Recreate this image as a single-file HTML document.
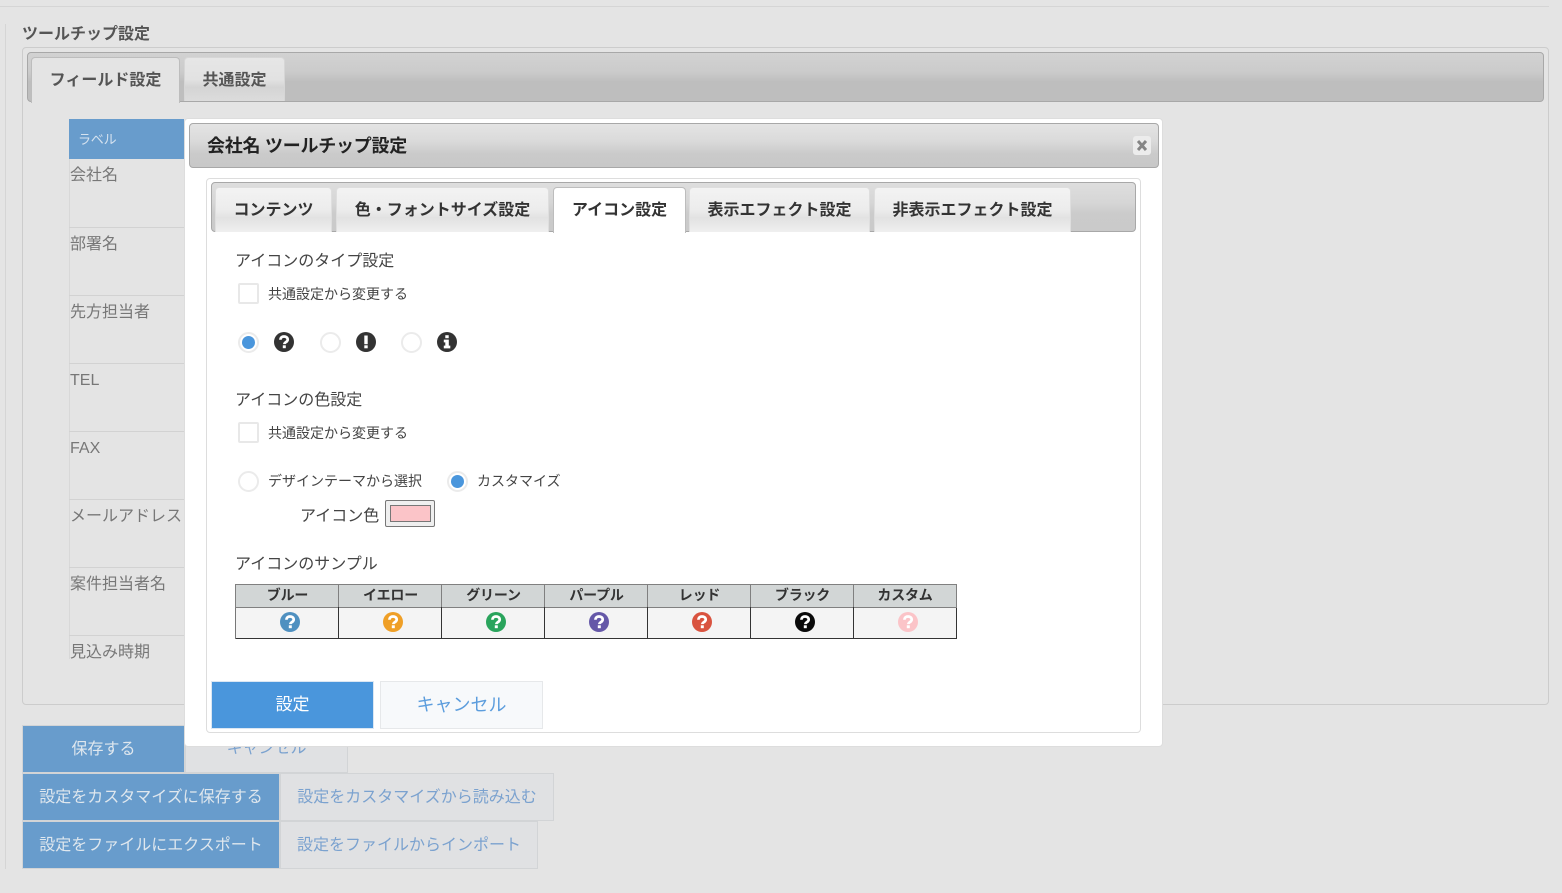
<!DOCTYPE html>
<html lang="ja"><head><meta charset="utf-8"><title>ツールチップ設定</title>
<style>
html,body{margin:0;padding:0;width:1562px;height:893px;overflow:hidden;background:#e4e4e4}
body{position:relative;font-family:"Liberation Sans","Noto Sans CJK JP",sans-serif;color:#333}
div,span,svg{position:absolute;box-sizing:border-box}
.t{white-space:nowrap;line-height:20px;height:20px}
.bar{background:linear-gradient(#d2d2d2 0,#cbcbcb 40%,#bebebe 60%,#bebebe 100%);border:1px solid #a8a8a8;border-radius:4px}
.tab{border-radius:4px 4px 0 0;text-align:center;font-weight:700;font-size:16px;line-height:46px;white-space:nowrap}
.tb{background:linear-gradient(#e6e6e6 0,#e2e2e2 50%,#d4d4d4 68%,#dcdcdc 100%);color:#555;border:1px solid #d6d6d6;border-bottom:0}
.ti{background:linear-gradient(#f3f3f3 0,#ececec 50%,#e2e2e2 68%,#efefef 100%);color:#333;border:1px solid #dedede;border-bottom:0}
.rl{left:69px;width:115px;height:1px;background:#d2d2d2}
.rt{left:70px;font-size:16px;color:#777}
.cb{width:21px;height:21px;border:2px solid #e8e8e8;background:#fff;border-radius:2px}
.rd{width:21px;height:21px;border:2px solid #ebebeb;background:#fff;border-radius:50%}
.rd.on:after{content:"";position:absolute;left:3px;top:3px;width:11px;height:11px;background:#4a96dc;border-radius:50%;display:block;box-shadow:0 0 0 1px #4a96dc}
.btn{text-align:center;font-size:16px;white-space:nowrap}
.p{background:#689ccc;color:#dfe7ee;border:1px solid #d2d4d6}
.s{background:#e0e1e3;color:#7ba2cf;border:1px solid #d2d4d6}
.th{top:585px;height:22px;width:103px;background:#d2d6d6;text-align:center;font-size:14px;font-weight:700;line-height:21px;letter-spacing:-.2px;color:#333;white-space:nowrap}
.vh{top:584px;width:1px;height:23px;background:#808080}
.vb{top:607px;width:1px;height:32px;background:#333}
</style></head><body>
<div style="left:0;top:6px;width:1549px;height:1px;background:#d5d5d5"></div>
<div style="left:5px;top:24px;width:1px;height:845px;background:#d5d5d5"></div>
<div class="t" style="left:22px;top:25px;font-size:16px;font-weight:700;color:#555">ツールチップ設定</div>
<div style="left:22px;top:47px;width:1527px;height:658px;border:1px solid #ccc;border-radius:4px"></div>
<div class="bar" style="left:27px;top:52px;width:1517px;height:50px"></div>
<div class="tab" style="left:31px;top:57px;width:149px;height:46px;background:#e4e4e4;border:1px solid #bdbdbd;border-bottom:0;color:#555">フィールド設定</div>
<div class="tab tb" style="left:184px;top:57px;width:101px;height:44px">共通設定</div>

<div style="left:69px;top:119px;width:115px;height:40px;background:#689ccc"></div>
<div class="t" style="left:78px;top:130px;font-size:13px;letter-spacing:-.2px;color:#d5e2ef">ラベル</div>
<div style="left:69px;top:159px;width:1px;height:500px;background:#d8d8d8"></div>
<div class="t rt" style="top:166px">会社名</div>
<div class="rl" style="top:227px"></div><div class="t rt" style="top:235px">部署名</div>
<div class="rl" style="top:295px"></div><div class="t rt" style="top:303px">先方担当者</div>
<div class="rl" style="top:363px"></div><div class="t rt" style="top:371px">TEL</div>
<div class="rl" style="top:431px"></div><div class="t rt" style="top:439px">FAX</div>
<div class="rl" style="top:499px"></div><div class="t rt" style="top:507px">メールアドレス</div>
<div class="rl" style="top:567px"></div><div class="t rt" style="top:575px">案件担当者名</div>
<div class="rl" style="top:635px"></div><div class="t rt" style="top:643px">見込み時期</div>

<div class="btn p" style="left:22px;top:725px;width:163px;height:48px;line-height:47px">保存する</div>
<div class="btn s" style="left:185px;top:725px;width:163px;height:48px;line-height:46px;font-size:16px">キャンセル</div>
<div class="btn p" style="left:22px;top:773px;width:258px;height:48px;line-height:47px">設定をカスタマイズに保存する</div>
<div class="btn s" style="left:280px;top:773px;width:274px;height:48px;line-height:47px">設定をカスタマイズから読み込む</div>
<div class="btn p" style="left:22px;top:821px;width:258px;height:48px;line-height:47px">設定をファイルにエクスポート</div>
<div class="btn s" style="left:280px;top:821px;width:258px;height:48px;line-height:47px">設定をファイルからインポート</div>

<!-- dialog -->
<div style="left:184px;top:118px;width:979px;height:629px;background:#fff;border:1px solid #ddd;border-radius:4px"></div>
<div style="left:189px;top:123px;width:970px;height:45px;border:1px solid #a8a8a8;border-radius:4px;background:linear-gradient(#e4e4e4 0,#dadada 40%,#cacaca 70%,#c8c8c8 100%)"></div>
<div class="t" style="left:207px;top:136px;font-size:18px;font-weight:700;letter-spacing:-.25px;color:#222">会社名 ツールチップ設定</div>
<div style="left:1133px;top:136px;width:18px;height:19px;background:#ececec;border-radius:3px"></div>
<svg style="left:1137px;top:140px" width="10" height="11" viewBox="0 0 10 11"><path d="M1 1L9 10M9 1L1 10" stroke="#858585" stroke-width="3" fill="none"/></svg>

<div style="left:206px;top:178px;width:935px;height:555px;border:1px solid #ddd;border-radius:4px"></div>
<div style="left:211px;top:182px;width:925px;height:50px;border:1px solid #a8a8a8;border-radius:4px;background:linear-gradient(#dedede 0,#d6d6d6 40%,#cbcbcb 65%,#cacaca 100%)"></div>
<div class="tab ti" style="left:215px;top:187px;width:117px;height:45px">コンテンツ</div>
<div class="tab ti" style="left:336px;top:187px;width:213px;height:45px">色・フォントサイズ設定</div>
<div class="tab" style="left:553px;top:187px;width:133px;height:46px;background:#fff;border:1px solid #bdbdbd;border-bottom:0;color:#333">アイコン設定</div>
<div class="tab ti" style="left:689px;top:187px;width:181px;height:45px">表示エフェクト設定</div>
<div class="tab ti" style="left:874px;top:187px;width:197px;height:45px">非表示エフェクト設定</div>

<div class="t" style="left:235px;top:252px;font-size:16px;color:#444">アイコンのタイプ設定</div>
<div class="cb" style="left:238px;top:283px"></div>
<div class="t" style="left:268px;top:284px;font-size:14px;color:#444">共通設定から変更する</div>
<div class="rd on" style="left:238px;top:332px"></div>
<div class="rd" style="left:320px;top:332px"></div>
<div class="rd" style="left:401px;top:332px"></div>
<svg style="left:274px;top:332px" width="20" height="20" viewBox="0 0 20 20"><circle cx="10" cy="10" r="10" fill="#333"/><path d="M6.300 7.800C6.500 5.600 8 4.500 10 4.500c2.100 0 3.700 1.200 3.700 3.100 0 2.500-3.300 2.500-3.300 4.500" fill="none" stroke="#fff" stroke-width="2.700"/><rect x="8.800" y="13.300" width="3" height="2.900" fill="#fff"/></svg>
<svg style="left:356px;top:332px" width="20" height="20" viewBox="0 0 20 20"><circle cx="10" cy="10" r="10" fill="#333"/><rect x="8.300" y="3.500" width="3.400" height="8.700" fill="#fff"/><rect x="8.300" y="13.300" width="3.400" height="3" fill="#fff"/></svg>
<svg style="left:437px;top:332px" width="20" height="20" viewBox="0 0 20 20"><circle cx="10" cy="10" r="10" fill="#333"/><rect x="8.300" y="3.200" width="3.400" height="3" fill="#fff"/><path d="M6.800 7.600h5v6h1.500v2.800H6.800v-2.800h1.500v-3.200H6.800z" fill="#fff"/></svg>

<div class="t" style="left:235px;top:391px;font-size:16px;color:#444">アイコンの色設定</div>
<div class="cb" style="left:238px;top:422px"></div>
<div class="t" style="left:268px;top:423px;font-size:14px;color:#444">共通設定から変更する</div>
<div class="rd" style="left:238px;top:471px"></div>
<div class="t" style="left:268px;top:471px;font-size:14px;color:#444">デザインテーマから選択</div>
<div class="rd on" style="left:447px;top:471px"></div>
<div class="t" style="left:477px;top:471px;font-size:14px;color:#444">カスタマイズ</div>
<div class="t" style="left:300px;top:507px;font-size:16px;color:#444">アイコン色</div>
<div style="left:385px;top:500px;width:50px;height:27px;background:#efefef;border:1px solid #777;border-radius:2px"></div>
<div style="left:390px;top:505px;width:41px;height:17px;background:#fbc4c8;border:1px solid #777"></div>

<div class="t" style="left:235px;top:555px;font-size:16px;color:#444">アイコンのサンプル</div>
<div style="left:235px;top:584px;width:722px;height:55px;background:#f4f4f4;border:1px solid #333;border-top:0"></div>
<div style="left:235px;top:584px;width:722px;height:24px;background:#d2d6d6;border:1px solid #808080"></div>
<div style="left:235px;top:608px;width:1px;height:31px;background:#777"></div>
<div class="th" style="left:236px">ブルー</div>
<div class="th" style="left:339px">イエロー</div>
<div class="th" style="left:442px">グリーン</div>
<div class="th" style="left:545px">パープル</div>
<div class="th" style="left:648px">レッド</div>
<div class="th" style="left:751px">ブラック</div>
<div class="th" style="left:854px;width:102px">カスタム</div>
<div class="vh" style="left:338px"></div><div class="vb" style="left:338px"></div>
<div class="vh" style="left:441px"></div><div class="vb" style="left:441px"></div>
<div class="vh" style="left:544px"></div><div class="vb" style="left:544px"></div>
<div class="vh" style="left:647px"></div><div class="vb" style="left:647px"></div>
<div class="vh" style="left:750px"></div><div class="vb" style="left:750px"></div>
<div class="vh" style="left:853px"></div><div class="vb" style="left:853px"></div>
<svg style="left:0;top:0" width="1562" height="893" viewBox="0 0 1562 893">
<defs><g id="q"><path d="M-3.700-2.200C-3.500-4.400-2-5.500 0-5.500c2.100 0 3.700 1.200 3.700 3.100 0 2.500-3.300 2.500-3.300 4.500" fill="none" stroke="#fff" stroke-width="2.700"/><rect x="-1.200" y="3.300" width="3" height="2.900" fill="#fff"/></g></defs>
<circle cx="290" cy="622" r="10" fill="#4f90c0"/><use href="#q" x="290" y="622"/>
<circle cx="393" cy="622" r="10" fill="#ef9f26"/><use href="#q" x="393" y="622"/>
<circle cx="496" cy="622" r="10" fill="#2aa45c"/><use href="#q" x="496" y="622"/>
<circle cx="599" cy="622" r="10" fill="#6558a8"/><use href="#q" x="599" y="622"/>
<circle cx="702" cy="622" r="10" fill="#d9533f"/><use href="#q" x="702" y="622"/>
<circle cx="805" cy="622" r="10" fill="#0a0a0a"/><use href="#q" x="805" y="622"/>
<circle cx="908" cy="622" r="10" fill="#fbc4c8"/><use href="#q" x="908" y="622"/>
</svg>

<div class="btn" style="left:211px;top:681px;width:163px;height:48px;background:#4a96dc;border:1px solid #dbe7f3;color:#fff;line-height:46px;font-size:17px">設定</div>
<div class="btn" style="left:380px;top:681px;width:163px;height:48px;background:#f7f9fb;border:1px solid #e6e8ea;color:#5c9ddd;line-height:47px;font-size:18px">キャンセル</div>
</body></html>
